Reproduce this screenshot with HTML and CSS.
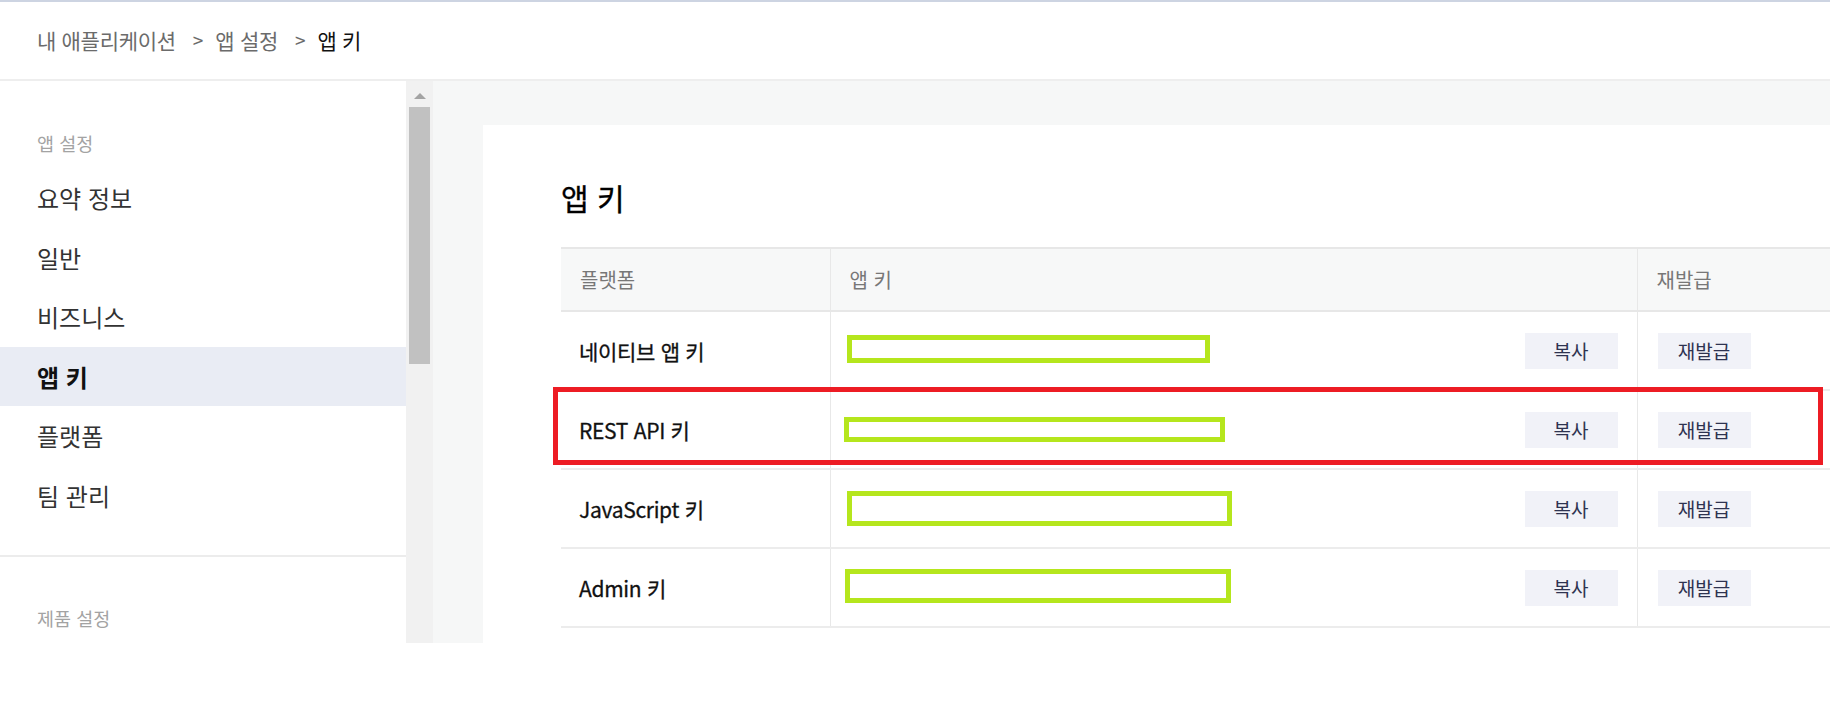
FILE: index.html
```html
<!DOCTYPE html>
<html lang="ko">
<head>
<meta charset="utf-8">
<title>앱 키</title>
<link rel="stylesheet" href="styles.css">
</head>
<body>
<div class="page">
  <header class="header">
    <nav class="crumbs">
      <span class="crumb">내 애플리케이션</span>
      <span class="sep">&gt;</span>
      <span class="crumb">앱 설정</span>
      <span class="sep">&gt;</span>
      <span class="crumb current">앱 키</span>
    </nav>
  </header>
  <div class="main">
    <aside class="sidebar">
      <div class="side-group">
        <div class="side-label">앱 설정</div>
        <ul class="side-menu">
          <li class="side-item">요약 정보</li>
          <li class="side-item">일반</li>
          <li class="side-item">비즈니스</li>
          <li class="side-item active">앱 키</li>
          <li class="side-item">플랫폼</li>
          <li class="side-item">팀 관리</li>
        </ul>
      </div>
      <div class="side-group second">
        <div class="side-label">제품 설정</div>
      </div>
    </aside>
    <div class="scrollbar">
      <div class="scroll-up"><span class="arrow"></span></div>
      <div class="scroll-thumb"></div>
    </div>
    <section class="content">
      <div class="card">
        <h1 class="title">앱 키</h1>
        <div class="table-wrap">
          <table class="keys">
            <thead>
              <tr>
                <th class="col-platform">플랫폼</th>
                <th class="col-key">앱 키</th>
                <th class="col-reissue">재발급</th>
              </tr>
            </thead>
            <tbody>
              <tr>
                <td class="name">네이티브 앱 키</td>
                <td class="keycell"><div class="keyline"><span class="mask m1"></span><button class="btn">복사</button></div></td>
                <td class="recell"><button class="btn">재발급</button></td>
              </tr>
              <tr>
                <td class="name">REST API 키</td>
                <td class="keycell"><div class="keyline"><span class="mask m2"></span><button class="btn">복사</button></div></td>
                <td class="recell"><button class="btn">재발급</button></td>
              </tr>
              <tr>
                <td class="name">JavaScript 키</td>
                <td class="keycell"><div class="keyline"><span class="mask m3"></span><button class="btn">복사</button></div></td>
                <td class="recell"><button class="btn">재발급</button></td>
              </tr>
              <tr>
                <td class="name">Admin 키</td>
                <td class="keycell"><div class="keyline"><span class="mask m4"></span><button class="btn">복사</button></div></td>
                <td class="recell"><button class="btn">재발급</button></td>
              </tr>
            </tbody>
          </table>
          <div class="highlight"></div>
        </div>
      </div>
    </section>
  </div>
</div>
</body>
</html>
```
FILE: styles.css
```css
* { box-sizing: border-box; }
html, body {
  margin: 0;
  padding: 0;
  background: #ffffff;
  font-family: "Noto Sans CJK KR", "Noto Sans", sans-serif;
  color: #222;
}
.page {
  width: 1830px;
  height: 719px;
  overflow: hidden;
  border-top: 2px solid #cdd4e2;
}
.header {
  height: 79px;
  border-bottom: 2px solid #eeeeee;
  display: flex;
  align-items: center;
  padding-left: 37px;
  padding-bottom: 2px;
}
.crumbs {
  display: flex;
  align-items: center;
  font-size: 21px;
  color: #6b6b6b;
}
.crumb { letter-spacing: -0.3px; }
.sep {
  margin: 0 12px 0 17px;
  font-size: 19px;
  color: #6b6b6b;
}
.crumb.current { color: #111; }

.main {
  display: flex;
  height: 562px;
}
.sidebar {
  width: 406px;
  flex: none;
  background: #fff;
  padding-top: 50px;
}
.side-label {
  font-size: 18.5px;
  line-height: 24px;
  color: #a3a3a3;
  padding-left: 37px;
}
.side-menu {
  list-style: none;
  margin: 13px 0 0 0;
  padding: 0;
}
.side-item {
  height: 59.5px;
  line-height: 59.5px;
  font-size: 24px;
  padding-left: 37px;
  color: #333;
}
.side-item.active {
  background: #e9ecf4;
  color: #111;
  font-weight: 700;
}
.side-group {
  padding-bottom: 30px;
}
.side-group.second {
  border-top: 2px solid #ececec;
  padding-top: 49px;
}

.scrollbar {
  width: 27px;
  flex: none;
  background: #f1f1f1;
  display: flex;
  flex-direction: column;
  align-items: center;
}
.scroll-up {
  height: 26px;
  width: 100%;
  display: flex;
  align-items: center;
  justify-content: center;
  padding-top: 4px;
}
.arrow {
  width: 0;
  height: 0;
  border-left: 6px solid transparent;
  border-right: 6px solid transparent;
  border-bottom: 6px solid #a3a3a3;
}
.scroll-thumb {
  width: 21px;
  height: 257px;
  background: #c1c1c1;
}

.content {
  flex: 1;
  background: #f6f7f7;
  padding: 44px 0 0 50px;
  overflow: hidden;
}
.card {
  background: #fff;
  height: 100%;
  padding: 52px 0 0 78px;
  overflow: hidden;
}
.title {
  margin: 0;
  font-size: 30px;
  line-height: 40px;
  font-weight: 400;
  color: #000;
  -webkit-text-stroke: 0.35px #000;
}
.table-wrap {
  position: relative;
  margin-top: 30px;
  width: 1400px;
}
.keys {
  border-collapse: collapse;
  width: 1400px;
  table-layout: fixed;
}
.keys th {
  height: 63px;
  background: #f7f8f8;
  border-top: 2px solid #e7e7e7;
  border-bottom: 2px solid #e7e7e7;
  text-align: left;
  font-weight: 400;
  font-size: 20px;
  color: #777;
  padding: 0 0 0 19px;
}
.keys th + th, .keys td + td {
  border-left: 1px solid #e8e8e8;
}
.col-platform { width: 269px; }
.col-key { width: 807px; }
.keys td {
  height: 79px;
  border-bottom: 2px solid #ececec;
  padding: 0;
  vertical-align: middle;
}
.keys td.name {
  padding-left: 18px;
  font-size: 21px;
  font-weight: 400;
  color: #111;
  letter-spacing: -0.3px;
  -webkit-text-stroke: 0.3px #111;
}
.keyline {
  display: flex;
  align-items: center;
  justify-content: space-between;
  padding: 0 19px 0 16px;
}
.recell { padding-left: 20px !important; }
.mask {
  display: block;
  border: 5px solid #b5e61d;
  background: transparent;
}
.m1 { width: 363px; height: 28px; margin-top: -4px; }
.m2 { width: 381px; height: 25px; margin-left: -3px; }
.m3 { width: 385px; height: 35px; }
.m4 { width: 386px; height: 34px; margin-left: -2px; margin-top: -4px; }
.btn {
  width: 93px;
  height: 36px;
  border: none;
  background: #f1f2f8;
  color: #2e3350;
  font-family: "Noto Sans CJK KR", "Noto Sans", sans-serif;
  font-size: 19px;
  padding: 0;
  cursor: pointer;
}
.highlight {
  position: absolute;
  left: -8px;
  top: 140px;
  width: 1270px;
  height: 78px;
  border: 5px solid #ed1c24;
  pointer-events: none;
}
```
